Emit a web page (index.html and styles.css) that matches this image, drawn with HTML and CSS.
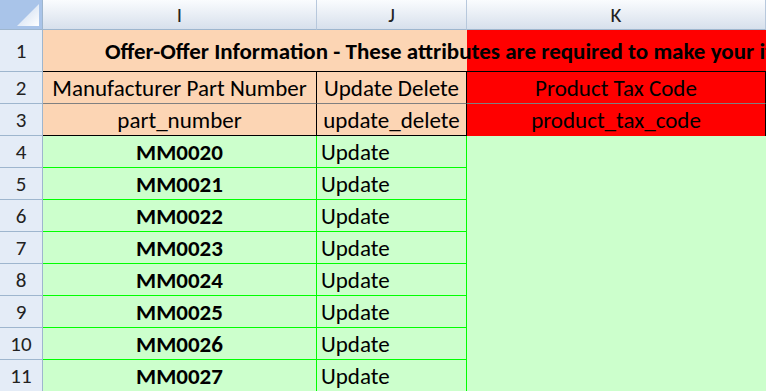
FILE: index.html
```html
<!doctype html>
<html>
    <head>
        <meta charset="utf-8" />
        <meta name="viewport" content="width=device-width" />
        <title>Offer sheet</title>
        <link rel="stylesheet" href="styles.css">
    </head>
    <body>
        <div class="sheet">
            <div class="cell corner">
                <svg width="42" height="29" viewBox="0 0 42 29">
                    <defs>
                        <linearGradient id="tri" x1="1" y1="1" x2="0" y2="0">
                            <stop offset="0" stop-color="#ffffff" />
                            <stop offset="1" stop-color="#c4d6ee" />
                        </linearGradient>
                    </defs>
                    <polygon points="17,26 39,26 39,4" fill="url(#tri)" />
                </svg>
            </div>
            <div class="cell colhead">I</div>
            <div class="cell colhead">J</div>
            <div class="cell colhead">K</div>

            <div class="cell rowhead">1</div>
            <div class="cell title">Offer-Offer Information - These attributes are required to make your item buyable for customers on the site</div>

            <div class="cell rowhead">2</div>
            <div class="cell hdr upper">Manufacturer Part Number</div>
            <div class="cell hdr upper">Update Delete</div>
            <div class="cell hdr upper req">Product Tax Code</div>

            <div class="cell rowhead">3</div>
            <div class="cell hdr lower">part_number</div>
            <div class="cell hdr lower">update_delete</div>
            <div class="cell hdr req">product_tax_code</div>

            <div class="cell rowhead">4</div>
            <div class="cell data part">MM0020</div>
            <div class="cell data action">Update</div>
            <div class="cell blank"></div>

            <div class="cell rowhead">5</div>
            <div class="cell data part">MM0021</div>
            <div class="cell data action">Update</div>

            <div class="cell rowhead">6</div>
            <div class="cell data part">MM0022</div>
            <div class="cell data action">Update</div>

            <div class="cell rowhead">7</div>
            <div class="cell data part">MM0023</div>
            <div class="cell data action">Update</div>

            <div class="cell rowhead">8</div>
            <div class="cell data part">MM0024</div>
            <div class="cell data action">Update</div>

            <div class="cell rowhead">9</div>
            <div class="cell data part">MM0025</div>
            <div class="cell data action">Update</div>

            <div class="cell rowhead">10</div>
            <div class="cell data part">MM0026</div>
            <div class="cell data action">Update</div>

            <div class="cell rowhead">11</div>
            <div class="cell data part">MM0027</div>
            <div class="cell data action">Update</div>
        </div>
    </body>
</html>
```

FILE: styles.css
```css
html,
body {
    margin: 0;
    overflow: hidden;
    background: #ffffff;
}
body {
    font-family: Carlito, Lato, "Noto Sans", sans-serif;
    font-size: 23px;
    color: #000000;
}
.sheet {
    display: grid;
    grid-template-columns: 43px 274px 150px 1fr;
    grid-template-rows: 30px 42px repeat(10, 32px);
    width: 766px;
    height: 391px;
    overflow: hidden;
}
.cell {
    box-sizing: border-box;
    display: flex;
    align-items: center;
    white-space: nowrap;
    overflow: hidden;
}
.corner {
    background: #a9c4e9;
    border-right: 1px solid #9eb6ce;
    border-bottom: 1px solid #9eb6ce;
}
.corner svg {
    display: block;
}
.colhead {
    justify-content: center;
    background: linear-gradient(#fafcfe, #d7e0ec);
    border-right: 1px solid #b7c8dc;
    border-bottom: 1px solid #9eb6ce;
    color: #222222;
    font-size: 21px;
}
.rowhead {
    justify-content: center;
    background: #e4ecf7;
    border-right: 1px solid #9eb6ce;
    border-bottom: 1px solid #9eb6ce;
    color: #222222;
    font-size: 21px;
}
.title {
    grid-column: 2 / -1;
    padding-left: 62px;
    background: linear-gradient(to right, #fcd5b4 424px, #ff0000 424px);
    border-bottom: 1px solid #000000;
    font-weight: bold;
}
.hdr {
    justify-content: center;
    background: #fcd5b4;
    border-right: 1px solid #000000;
}
.upper {
    border-bottom: 1px solid #808080;
}
.lower {
    border-bottom: 1px solid #000000;
}
.req {
    background: #ff0000;
}
.data {
    background: #ccffcc;
    border-right: 1px solid #00ff00;
    border-bottom: 1px solid #00ff00;
}
.part {
    justify-content: center;
    font-weight: bold;
}
.action {
    padding-left: 4px;
}
.blank {
    grid-column: 4;
    grid-row: 5 / span 8;
    background: #ccffcc;
}
```
